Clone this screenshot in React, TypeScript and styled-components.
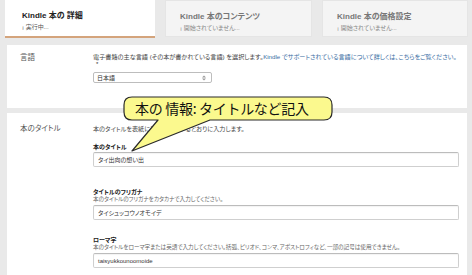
import React from "react";
import styled, { createGlobalStyle } from "styled-components";

const GlobalStyle = createGlobalStyle`
  html, body { margin: 0; padding: 0; }
  body {
    background: #e9e9e9;
    font-family: "Liberation Sans", "Noto Sans CJK JP", sans-serif;
    font-feature-settings: "palt";
  }
`;

const Page = styled.div`
  position: relative;
  width: 472px;
  height: 275px;
  overflow: hidden;
  background: #e9e9e9;
  display: flex;
  flex-direction: column;
`;

const TabBar = styled.div`
  display: flex;
  gap: 10px;
  padding-left: 5px;
  height: 38px;
  flex-shrink: 0;
`;

const Tab = styled.div<{ $active?: boolean; $w: number }>`
  width: ${(p) => p.$w}px;
  box-sizing: border-box;
  padding: 11px 0 0 ${(p) => (p.$active ? 17 : 14)}px;
  background: ${(p) => (p.$active ? "#ffffff" : "#f4f4f4")};
  border: ${(p) => (p.$active ? "none" : "1px solid #e5e5e5")};
  border-bottom: ${(p) => (p.$active ? "2px solid #d4a47c" : "1px solid #e5e5e5")};
  height: ${(p) => (p.$active ? 38 : 37)}px;
`;

const TabTitle = styled.div<{ $active?: boolean }>`
  font-size: 8px;
  line-height: 10px;
  font-weight: bold;
  color: ${(p) => (p.$active ? "#222" : "#777")};
  white-space: nowrap;
`;

const TabStatus = styled.div<{ $active?: boolean }>`
  margin-top: 2px;
  font-size: 6px;
  line-height: 8px;
  color: ${(p) => (p.$active ? "#555" : "#888")};
  white-space: nowrap;
`;

const Panel = styled.div<{ $top: number; $pt: number; $pb: number }>`
  margin: ${(p) => p.$top}px 0 0 7px;
  width: 460px;
  background: #fff;
  padding: ${(p) => p.$pt}px 0 ${(p) => p.$pb}px;
  flex-shrink: 0;
`;

const Row = styled.div`
  display: grid;
  grid-template-columns: 86px 1fr;
`;

const RowLabel = styled.div`
  padding-left: 13px;
  font-size: 7.5px;
  line-height: 10px;
  color: #555;
  white-space: nowrap;
`;

const RowBody = styled.div<{ $pt?: number }>`
  padding: ${(p) => p.$pt ?? 0}px 8px 0 0;
  display: flex;
  flex-direction: column;
`;

const Desc = styled.div`
  font-size: 6.15px;
  line-height: 8px;
  color: #444;
  white-space: nowrap;
`;

const Link = styled.span`
  color: #3b6ea3;
`;

const Required = styled.div`
  font-size: 6px;
  line-height: 6px;
  height: 6px;
  color: #333;
  padding-left: 3px;
`;

const Select = styled.div`
  margin-top: 5px;
  width: 119px;
  height: 11px;
  box-sizing: border-box;
  border: 1px solid #bdbdbd;
  border-radius: 2px;
  background: #fff;
  display: flex;
  align-items: center;
  justify-content: space-between;
  padding: 0 5px 0 3px;
  font-size: 6px;
  color: #333;
`;

const Field = styled.div<{ $gap: number }>`
  margin-top: ${(p) => p.$gap}px;
  display: flex;
  flex-direction: column;
`;

const FieldLabel = styled.div`
  font-size: 6px;
  line-height: 8px;
  font-weight: bold;
  color: #222;
  white-space: nowrap;
`;

const Hint = styled.div`
  font-size: 5.6px;
  line-height: 7px;
  color: #666;
  white-space: nowrap;
`;

const Input = styled.div<{ $gap: number }>`
  margin-top: ${(p) => p.$gap}px;
  width: 366px;
  height: 15px;
  box-sizing: border-box;
  border: 1px solid #cfcfcf;
  border-top-color: #bcbcbc;
  border-radius: 2px;
  box-shadow: inset 0 1px 1px rgba(0, 0, 0, 0.05);
  display: flex;
  align-items: center;
  padding-left: 4px;
  font-size: 6px;
  color: #333;
`;

const Callout = styled.div`
  position: absolute;
  left: 123px;
  top: 96px;
  width: 211px;
  height: 57px;
`;

const CalloutText = styled.span`
  position: absolute;
  left: 12px;
  top: 1px;
  height: 23px;
  line-height: 23px;
  font-family: "Noto Sans CJK JP", sans-serif;
  font-feature-settings: normal;
  font-size: 14px;
  letter-spacing: -0.3px;
  color: #111;
  white-space: nowrap;
`;

const SelectArrows = () => (
  <svg width="4" height="6" viewBox="0 0 4 6">
    <path d="M0 2.4 L2 0.4 L4 2.4 Z M0 3.6 L2 5.6 L4 3.6 Z" fill="#999" />
  </svg>
);

export default function App() {
  return (
    <Page>
      <GlobalStyle />
      <TabBar>
        <Tab $active $w={150}>
          <TabTitle $active>Kindle 本の 詳細</TabTitle>
          <TabStatus $active>¡ 実行中...</TabStatus>
        </Tab>
        <Tab $w={147}>
          <TabTitle>Kindle 本のコンテンツ</TabTitle>
          <TabStatus>¡ 開始されていません...</TabStatus>
        </Tab>
        <Tab $w={146}>
          <TabTitle>Kindle 本の価格設定</TabTitle>
          <TabStatus>¡ 開始されていません...</TabStatus>
        </Tab>
      </TabBar>

      <Panel $top={7} $pt={8} $pb={25}>
        <Row>
          <RowLabel>言語</RowLabel>
          <RowBody>
            <Desc>
              電子書籍の主な言語 (その本が書かれている言語) を選択します。
              <Link>Kindle でサポートされている言語について詳しくは、こちらをご覧ください。</Link>
            </Desc>
            <Required>*</Required>
            <Select>
              <span>日本語</span>
              <SelectArrows />
            </Select>
          </RowBody>
        </Row>
      </Panel>

      <Panel $top={5} $pt={11} $pb={20}>
        <Row>
          <RowLabel>本のタイトル</RowLabel>
          <RowBody $pt={1}>
            <Desc>本のタイトルを表紙に表示されているとおりに入力します。</Desc>
            <Field $gap={10}>
              <FieldLabel>本のタイトル</FieldLabel>
              <Input $gap={1}>タイ出向の想い出</Input>
            </Field>
            <Field $gap={21}>
              <FieldLabel>タイトルのフリガナ</FieldLabel>
              <Hint>本のタイトルのフリガナをカタカナで入力してください。</Hint>
              <Input $gap={2}>タイシュッコウノオモイデ</Input>
            </Field>
            <Field $gap={16}>
              <FieldLabel>ローマ字</FieldLabel>
              <Hint>
                本のタイトルをローマ字または英語で入力してください。括弧、ピリオド、コンマ、アポストロフィなど、一部の記号は使用できません。
              </Hint>
              <Input $gap={2}>taisyukkounoomoide</Input>
            </Field>
          </RowBody>
        </Row>
      </Panel>

      <Callout>
        <svg width="211" height="57" viewBox="0 0 211 57">
          <path
            d="M9 1 H201 Q209 1 209 9 V16 Q209 24 201 24 H87 L9 55 L35 24 H9 Q1 24 1 16 V9 Q1 1 9 1 Z"
            fill="#fbf98e"
            stroke="#2a2a2a"
            strokeWidth="1.2"
            strokeLinejoin="round"
          />
        </svg>
        <CalloutText>本の 情報: タイトルなど記入</CalloutText>
      </Callout>
    </Page>
  );
}
